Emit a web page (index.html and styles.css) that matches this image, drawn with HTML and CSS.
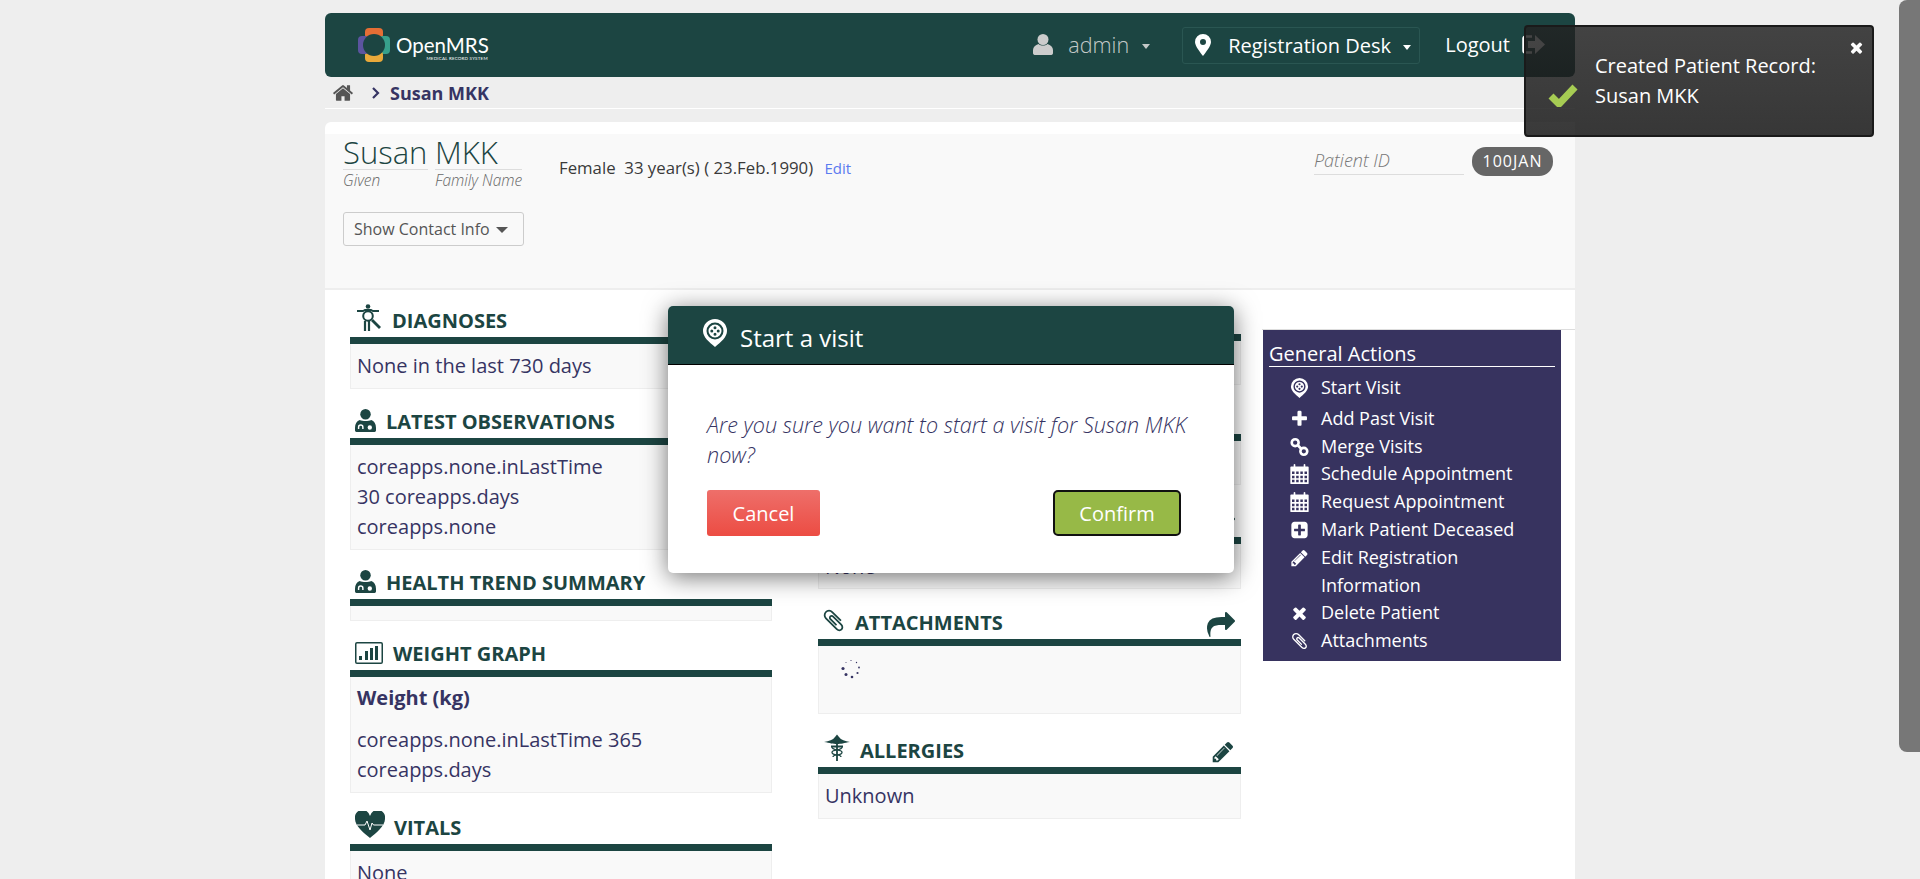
FILE: index.html
```html
<!DOCTYPE html>
<html lang="en">
<head>
    <meta charset="UTF-8">
    <meta name="viewport" content="width=device-width, initial-scale=1.0">
    <title>Susan MKK</title>
    <link rel="stylesheet" href="styles.css">
</head>
<body>

    <svg class="sprite" xmlns="http://www.w3.org/2000/svg">
        <symbol id="i-home" viewBox="0 0 1792 1792"><path d="M1472 992v480q0 26-19 45t-45 19h-384v-384h-256v384h-384q-26 0-45-19t-19-45v-480q0-1 .5-3t.5-3l575-474 575 474q1 2 1 6zm223-69l-62 74q-8 9-21 11h-3q-13 0-21-7l-692-577-692 577q-12 8-24 7-13-2-21-11l-62-74q-8-10-7-23.500t11-21.500l719-599q32-26 76-26t76 26l244 204v-195q0-14 9-23t23-9h192q14 0 23 9t9 23v408l219 182q10 8 11 21.500t-7 23.500z"/></symbol>
        <symbol id="i-pencil" viewBox="0 0 1792 1792"><path d="M491 1536l91-91-235-235-91 91v107h128v128h107zm523-928q0-22-22-22-10 0-17 7l-542 542q-7 7-7 17 0 22 22 22 10 0 17-7l542-542q7-7 7-17zm-54-192l416 416-832 832h-416v-416zm683 96q0 53-37 90l-166 166-416-416 166-165q36-38 90-38 53 0 91 38l235 234q37 39 37 91z"/></symbol>
        <symbol id="i-share" viewBox="0 0 1792 1792"><path d="M1792 640q0 26-19 45l-512 512q-19 19-45 19t-45-19-19-45v-256h-224q-98 0-175.500 6t-154 21.500-133 42.500-105.500 69.500-80 101-48.500 138.500-17.500 181q0 55 5 123 0 6 2.500 23.500t2.500 26.500q0 15-8.500 25t-23.500 10q-16 0-28-17-7-9-13-22t-13.500-30-10.500-24q-127-285-127-451 0-199 53-333 162-403 875-403h224v-256q0-26 19-45t45-19 45 19l512 512q19 19 19 45z"/></symbol>
        <symbol id="i-clip" viewBox="0 0 1792 1792"><path d="M1596 1385q0 117-79 196t-196 79q-135 0-235-100l-777-776q-113-115-113-271 0-159 110-270t269-111q158 0 273 113l605 606q10 10 10 22 0 16-30.500 46.500t-46.500 30.500q-13 0-23-10l-606-607q-79-77-181-77-106 0-179 75t-73 181q0 105 76 181l776 777q63 63 145 63 64 0 106-42t42-106q0-82-63-145l-581-581q-26-24-60-24-29 0-48 19t-19 48q0 32 25 59l410 410q10 10 10 22 0 16-31 47t-47 31q-12 0-22-10l-410-410q-63-61-63-149 0-82 57-139t139-57q88 0 149 63l581 581q100 98 100 235z"/></symbol>
        <symbol id="i-plus" viewBox="0 0 1792 1792"><path d="M1600 736v192q0 40-28 68t-68 28h-416v416q0 40-28 68t-68 28h-192q-40 0-68-28t-28-68v-416h-416q-40 0-68-28t-28-68v-192q0-40 28-68t68-28h416v-416q0-40 28-68t68-28h192q40 0 68 28t28 68v416h416q40 0 68 28t28 68z"/></symbol>
        <symbol id="i-times" viewBox="0 0 1792 1792"><path d="M1490 1322q0 40-28 68l-136 136q-28 28-68 28t-68-28l-294-294-294 294q-28 28-68 28t-68-28l-136-136q-28-28-28-68t28-68l294-294-294-294q-28-28-28-68t28-68l136-136q28-28 68-28t68 28l294 294 294-294q28-28 68-28t68 28l136 136q28 28 28 68t-28 68l-294 294 294 294q28 28 28 68z"/></symbol>
        <symbol id="i-plus-square" viewBox="0 0 1792 1792"><path d="M1408 960v-128q0-26-19-45t-45-19h-320v-320q0-26-19-45t-45-19h-128q-26 0-45 19t-19 45v320h-320q-26 0-45 19t-19 45v128q0 26 19 45t45 19h320v320q0 26 19 45t45 19h128q26 0 45-19t19-45v-320h320q26 0 45-19t19-45zm256-544v960q0 119-84.500 203.500t-203.500 84.500h-960q-119 0-203.500-84.500t-84.500-203.500v-960q0-119 84.500-203.500t203.500-84.500h960q119 0 203.500 84.500t84.500 203.500z"/></symbol>
        <symbol id="i-visit" viewBox="0 0 24 28"><path fill-rule="evenodd" d="M12 0A12 12 0 0 0 0 12c0 6 6 11 12 16 6-5 12-10 12-16A12 12 0 0 0 12 0zm0 3.500a8.500 8.500 0 1 1 0 17 8.500 8.500 0 0 1 0-17z"/><path fill-rule="evenodd" d="M12 5.500a6.500 6.500 0 1 1 0 13 6.500 6.500 0 0 1 0-13zm0 1.800a1.500 1.500 0 1 0 0 3 1.500 1.500 0 0 0 0-3zm0 6.400a1.500 1.500 0 1 0 0 3 1.500 1.500 0 0 0 0-3zM8.800 10.500a1.500 1.500 0 1 0 0 3 1.500 1.500 0 0 0 0-3zm6.400 0a1.500 1.500 0 1 0 0 3 1.500 1.500 0 0 0 0-3z"/></symbol>
        <symbol id="i-calendar" viewBox="0 0 22 24"><path fill-rule="evenodd" d="M1 3h3V1a1 1 0 0 1 2 0v2h10V1a1 1 0 0 1 2 0v2h3a1 1 0 0 1 1 1v19a1 1 0 0 1-1 1H1a1 1 0 0 1-1-1V4a1 1 0 0 1 1-1zm1 6v3h3V9zm5 0v3h3V9zm5 0v3h3V9zm5 0v3h3V9zM2 14v3h3v-3zm5 0v3h3v-3zm5 0v3h3v-3zm5 0v3h3v-3zM2 19v3h3v-3zm5 0v3h3v-3zm5 0v3h3v-3zm5 0v3h3v-3z"/></symbol>
        <symbol id="i-doctor" viewBox="0 0 22 24"><circle cx="11" cy="5.500" r="5.500"/><path fill-rule="evenodd" d="M5 11.500c3 1.500 9 1.500 12 0 3 1 5 4 5 8v3a1.500 1.500 0 0 1-1.500 1.500h-19A1.500 1.500 0 0 1 0 22.500v-3c0-4 2-7 5-8zM6 16a3 3 0 0 0-3 3v2h1.500v-2a1.500 1.500 0 0 1 3 0v2H9v-2a3 3 0 0 0-3-3zm9.500 1a2.300 2.300 0 1 0 0 4.600 2.300 2.300 0 0 0 0-4.600z"/></symbol>
    </svg>

    <div class="container">
        <header class="navbar">
            <a class="logo">
                <svg class="logo-mark" viewBox="0 0 32 34">
                    <rect fill="#e56e35" x="7" y="0" width="18" height="11" rx="4"/>
                    <rect fill="#37a08c" x="21" y="8" width="11" height="18" rx="4"/>
                    <rect fill="#e9a93a" x="7" y="23" width="18" height="11" rx="4"/>
                    <rect fill="#5b549f" x="0" y="8" width="11" height="18" rx="4"/>
                    <circle fill="#1c4542" cx="16" cy="17" r="11"/>
                </svg>
                <span class="logo-text">OpenMRS<small>MEDICAL RECORD SYSTEM</small></span>
            </a>
            <nav class="nav-right">
                <span class="nav-user">
                    <svg class="user-icon" viewBox="0 0 20 21"><circle cx="10" cy="5.500" r="5.500"/><path d="M5.500 10c2.500 2 6.500 2 9 0 3 1 5.500 3 5.500 6v3c0 1.500-1 2-2.500 2h-15C1 21 0 20.500 0 19v-3c0-3 2.500-5 5.500-6z"/></svg>
                    admin <i class="caret"></i>
                </span>
                <span class="nav-location">
                    <svg class="marker-icon" viewBox="0 0 16 22"><path fill-rule="evenodd" d="M8 0a8 8 0 0 0-8 8c0 4 5 10 8 14 3-4 8-10 8-14a8 8 0 0 0-8-8zm0 5a3 3 0 1 1 0 6 3 3 0 0 1 0-6z"/></svg>
                    Registration Desk <i class="caret"></i>
                </span>
                <span class="nav-logout">
                    Logout
                    <svg class="logout-icon" viewBox="0 0 23 19"><path fill="none" stroke="#fff" stroke-width="2.500" d="M10 1.500H3.500a2 2 0 0 0-2 2v12a2 2 0 0 0 2 2H10"/><path fill="#fff" d="M6 6h7V0l10 9.500L13 19v-6H6z"/></svg>
                </span>
            </nav>
        </header>

        <div class="breadcrumb">
            <svg class="home-icon"><use href="#i-home"/></svg>
            <svg class="crumb-arrow" viewBox="0 0 8 12"><path d="M1 1l5 5-5 5" fill="none" stroke="currentColor" stroke-width="2.200"/></svg>
            <strong>Susan MKK</strong>
        </div>

        <main class="card">
            <section class="patient-header">
                <div class="patient-left">
                    <div class="patient-name">
                        <div class="name-part name-given">
                            <span class="name-value">Susan</span>
                            <em>Given</em>
                        </div>
                        <div class="name-part name-family">
                            <span class="name-value">MKK</span>
                            <em>Family Name</em>
                        </div>
                    </div>
                    <button class="contact-btn">Show Contact Info <i class="contact-caret"></i></button>
                </div>
                <div class="patient-demo">
                    Female&nbsp; 33 year(s) ( 23.Feb.1990) <a class="edit-link">Edit</a>
                </div>
                <div class="patient-id">
                    <em class="id-label">Patient ID</em>
                    <span class="id-badge">100JAN</span>
                </div>
            </section>

            <section class="dashboard">
                <div class="col col-left">
                    <div class="widget">
                        <h3 class="widget-head">
                            <svg class="head-icon icon-body" viewBox="0 0 24 27">
                                <g fill="none" stroke="currentColor">
                                    <circle cx="11" cy="2.500" r="2.300" fill="currentColor" stroke="none"/>
                                    <path stroke-width="1.800" d="M0 7h6l2-1h6l2 1h6"/>
                                    <circle cx="11" cy="12" r="4.800" stroke-width="2"/>
                                    <path stroke-width="2.200" d="M8 17v10M12 17v10"/>
                                    <path stroke-width="2.800" d="M15 16l8 8"/>
                                </g>
                            </svg>
                            DIAGNOSES
                        </h3>
                        <div class="widget-body">None in the last 730 days</div>
                    </div>
                    <div class="widget">
                        <h3 class="widget-head">
                            <svg class="head-icon icon-doctor"><use href="#i-doctor"/></svg>
                            LATEST OBSERVATIONS
                        </h3>
                        <div class="widget-body">coreapps.none.inLastTime<br>30 coreapps.days<br>coreapps.none</div>
                    </div>
                    <div class="widget">
                        <h3 class="widget-head">
                            <svg class="head-icon icon-doctor"><use href="#i-doctor"/></svg>
                            HEALTH TREND SUMMARY
                        </h3>
                        <div class="widget-body widget-empty"></div>
                    </div>
                    <div class="widget">
                        <h3 class="widget-head">
                            <svg class="head-icon icon-chart" viewBox="0 0 28 22">
                                <path fill-rule="evenodd" d="M2 0h24a2 2 0 0 1 2 2v18a2 2 0 0 1-2 2H2a2 2 0 0 1-2-2V2a2 2 0 0 1 2-2zm0 1.500a.5.5 0 0 0-.5.500v18a.5.5 0 0 0 .5.500h24a.5.5 0 0 0 .5-.5V2a.5.5 0 0 0-.5-.5z"/>
                                <path d="M4 14h3v4H4zM10 9h3v9h-3zM15 6h3v12h-3zM20 4h3v14h-3z"/>
                            </svg>
                            WEIGHT GRAPH
                        </h3>
                        <div class="widget-body">
                            <p class="graph-title">Weight (kg)</p>
                            coreapps.none.inLastTime 365<br>coreapps.days
                        </div>
                    </div>
                    <div class="widget widget-vitals">
                        <h3 class="widget-head">
                            <svg class="head-icon icon-heart" viewBox="0 0 30 27">
                                <path d="M15 27C9 22 0 15 0 8a7.500 7.500 0 0 1 15-3 7.500 7.500 0 0 1 15 3c0 7-9 14-15 19z"/>
                                <path fill="none" stroke="#fff" stroke-width="1" d="M2 14h8l2-4 3 9 2-7 1.500 2H28"/>
                            </svg>
                            VITALS
                        </h3>
                        <div class="widget-body">None</div>
                    </div>
                </div>

                <div class="col col-mid">
                    <div class="widget">
                        <h3 class="widget-head">
                            <svg class="head-icon icon-peek"><use href="#i-calendar"/></svg>
                        </h3>
                        <div class="widget-body widget-hidden-a"></div>
                    </div>
                    <div class="widget">
                        <h3 class="widget-head"></h3>
                        <div class="widget-body widget-hidden-b"></div>
                    </div>
                    <div class="widget widget-third">
                        <h3 class="widget-head">
                            <svg class="head-action icon-share"><use href="#i-share"/></svg>
                        </h3>
                        <div class="widget-body">None</div>
                    </div>
                    <div class="widget widget-attach">
                        <h3 class="widget-head">
                            <svg class="head-icon icon-clip"><use href="#i-clip"/></svg>
                            ATTACHMENTS
                            <svg class="head-action icon-share"><use href="#i-share"/></svg>
                        </h3>
                        <div class="widget-body widget-loading">
                            <svg class="spinner" viewBox="0 0 20 20">
                                <circle cx="10" cy="1.500" r=".6"/><circle cx="15.500" cy="3.500" r=".7"/><circle cx="18" cy="8.500" r=".9"/>
                                <circle cx="16.500" cy="14" r="1.100"/><circle cx="11" cy="18" r="1.300"/><circle cx="5" cy="15.500" r="1.500"/>
                                <circle cx="2" cy="9.500" r="1.600"/><circle cx="5" cy="3.500" r=".5"/>
                            </svg>
                        </div>
                    </div>
                    <div class="widget widget-allergy">
                        <h3 class="widget-head">
                            <svg class="head-icon icon-caduceus" viewBox="0 0 26 27">
                                <path d="M0 8c5-1 9-2 11-5l2-2.500L15 3c2 3 6 4 11 5-6 1-9 2-13 2S6 9 0 8z"/>
                                <g fill="none" stroke="currentColor">
                                    <path stroke-width="1.800" d="M13 9v18M7 12.500h12"/>
                                    <path stroke-width="1.300" d="M8 13c0 4 10 2 10 5.500S9 20 9 23M18 13c0 4-10 2-10 5.500S17 20 17 23"/>
                                </g>
                            </svg>
                            ALLERGIES
                            <svg class="head-action icon-edit"><use href="#i-pencil"/></svg>
                        </h3>
                        <div class="widget-body">Unknown</div>
                    </div>
                </div>

                <aside class="actions">
                    <h4>General Actions</h4>
                    <ul>
                        <li class="action-first"><svg><use href="#i-visit"/></svg>Start Visit</li>
                        <li><svg><use href="#i-plus"/></svg>Add Past Visit</li>
                        <li>
                            <svg viewBox="0 0 22 22"><g fill="none" stroke="currentColor" stroke-width="3"><circle cx="6" cy="6" r="4"/><circle cx="16" cy="16" r="4"/><path d="M9 9l4 4"/></g></svg>
                            Merge Visits
                        </li>
                        <li><svg><use href="#i-calendar"/></svg>Schedule Appointment</li>
                        <li><svg><use href="#i-calendar"/></svg>Request Appointment</li>
                        <li><svg><use href="#i-plus-square"/></svg>Mark Patient Deceased</li>
                        <li><svg><use href="#i-pencil"/></svg>Edit Registration Information</li>
                        <li><svg><use href="#i-times"/></svg>Delete Patient</li>
                        <li><svg><use href="#i-clip"/></svg>Attachments</li>
                    </ul>
                </aside>
            </section>
        </main>
    </div>

    <!-- Start visit dialog -->
    <div class="dialog">
        <div class="dialog-head">
            <svg class="dialog-icon"><use href="#i-visit"/></svg>
            <h2>Start a visit</h2>
        </div>
        <div class="dialog-body">
            <p>Are you sure you want to start a visit for Susan MKK now?</p>
            <div class="dialog-buttons">
                <button class="btn-cancel">Cancel</button>
                <button class="btn-confirm">Confirm</button>
            </div>
        </div>
    </div>

    <!-- Toast message -->
    <div class="toast">
        <svg class="toast-close"><use href="#i-times"/></svg>
        <svg class="toast-check" viewBox="0 0 30 23"><path d="M3 12l8 8L27 3" fill="none" stroke="#a6cc53" stroke-width="7" stroke-linejoin="round"/></svg>
        <p>Created Patient Record:<br>Susan MKK</p>
    </div>

    <div class="scroll-thumb"></div>
</body>
</html>
```

FILE: styles.css
```css
* {
    box-sizing: border-box;
}

html, body {
    height: 879px;
    margin: 0;
    overflow: hidden;
}

body {
    position: relative;
    background-color: #eee;
    color: #363463;
    font-family: "Open Sans", sans-serif;
    font-size: 20px;
}

.sprite {
    display: none;
}

.container {
    width: 1250px;
    margin-left: 325px;
    padding-top: 13px;
}

/* Top bar */
.navbar {
    display: flex;
    justify-content: space-between;
    align-items: center;
    height: 64px;
    background-color: #1c4542;
    border-radius: 6px;
    color: #fff;
}

.logo {
    display: flex;
    align-items: center;
    margin-left: 33px;
}

.logo-mark {
    width: 32px;
    height: 34px;
}

.logo-text {
    position: relative;
    margin-left: 6px;
    font-family: Lato, sans-serif;
    font-size: 20.500px;
    font-weight: 400;
    line-height: 30px;
}

.logo-text small {
    position: absolute;
    right: 1px;
    top: 26px;
    font-size: 4.500px;
    line-height: 6px;
    letter-spacing: .2px;
    white-space: nowrap;
}

.nav-right {
    display: flex;
    align-items: center;
    font-size: 20px;
    margin-right: 30px;
}

.nav-user {
    display: flex;
    align-items: center;
    padding-bottom: 2px;
    color: #c4c9c8;
    font-size: 21.600px;
    font-weight: 300;
    margin-right: 32px;
}

.user-icon {
    width: 20px;
    height: 21px;
    margin-right: 15px;
    fill: #ccc;
}

.caret {
    display: inline-block;
    width: 0;
    height: 0;
    margin-left: 13px;
    margin-top: 4px;
    border-top: 5px solid currentColor;
    border-left: 4px solid transparent;
    border-right: 4px solid transparent;
}

.nav-location {
    display: flex;
    align-items: center;
    width: 238px;
    height: 37px;
    padding-left: 12px;
    margin-right: 25px;
    border: 1px solid #2a5652;
    border-radius: 3px;
}

.nav-location .caret {
    margin-left: 12px;
}

.marker-icon {
    width: 16px;
    height: 22px;
    margin-right: 17px;
    fill: #fff;
}

.nav-logout {
    display: flex;
    align-items: center;
    padding-bottom: 1px;
}

.logout-icon {
    width: 23px;
    height: 19px;
    margin-left: 12px;
}

/* Breadcrumb */
.breadcrumb {
    display: flex;
    align-items: center;
    height: 32px;
    padding-left: 7px;
    border-bottom: 1px solid #fff;
    font-size: 18px;
}

.breadcrumb strong {
    font-weight: 700;
    margin-left: 10px;
    padding-top: 1px;
}

.home-icon {
    width: 22px;
    height: 22px;
    fill: #555;
}

.crumb-arrow {
    width: 8px;
    height: 12px;
    margin-left: 18px;
}

/* Main card */
.card {
    margin-top: 13px;
    padding-top: 12px;
    background-color: #fff;
    border-radius: 6px 0 0 0;
    height: 800px;
}

.patient-header {
    display: flex;
    align-items: flex-start;
    height: 156px;
    padding-left: 18px;
    background-color: #f9f9f9;
    border-bottom: 2px solid #eee;
}

.patient-left {
    width: 181px;
}

.patient-name {
    display: flex;
    color: #1c4542;
}

.name-part {
    display: flex;
    flex-direction: column;
}

.name-given {
    width: 85px;
    margin-right: 7px;
}

.name-family {
    width: 87px;
}

.name-value {
    display: block;
    height: 36px;
    font-size: 31px;
    font-weight: 300;
    line-height: 36px;
    border-bottom: 1px solid #ddd;
}

.name-part em {
    font-size: 15.500px;
    font-weight: 300;
    line-height: 21px;
    color: #666;
    white-space: nowrap;
}

.contact-btn {
    display: block;
    width: 181px;
    height: 34px;
    margin-top: 21px;
    padding: 0 0 0 10px;
    background-color: #fff0;
    border: 1px solid #ccc;
    border-radius: 3px;
    color: #555;
    font-family: "Open Sans", sans-serif;
    font-size: 16px;
    text-align: left;
}

.contact-caret {
    display: inline-block;
    margin: 0 0 2px 2px;
    border-top: 6px solid #555;
    border-left: 6px solid transparent;
    border-right: 6px solid transparent;
}

.patient-demo {
    margin: 22px 0 0 35px;
    font-size: 16.800px;
    color: #3a3a3a;
    line-height: 24px;
    white-space: nowrap;
}

.edit-link {
    margin-left: 7px;
    font-size: 15px;
    color: #5b7bf0;
}

.patient-id {
    display: flex;
    align-items: flex-start;
    margin: 13px 0 0 auto;
    padding-right: 22px;
}

.id-label {
    display: block;
    width: 150px;
    height: 28px;
    font-size: 18px;
    font-weight: 300;
    line-height: 27px;
    color: #777;
    border-bottom: 1px solid #ddd;
}

.id-badge {
    width: 81px;
    height: 29px;
    margin-left: 8px;
    background-color: #666;
    border-radius: 14px;
    color: #fff;
    font-size: 16px;
    line-height: 29px;
    letter-spacing: 1px;
    text-align: center;
}

/* Dashboard columns */
.dashboard {
    display: flex;
    align-items: flex-start;
    padding-left: 25px;
}

.col {
    flex: none;
}

.col-left {
    width: 422px;
    margin-top: 14px;
}

.col-mid {
    width: 423px;
    margin-top: 11px;
    margin-left: 46px;
}

.widget {
    margin-bottom: 16px;
}

.widget-vitals {
    margin-top: 18px;
}

.widget-third {
    margin-top: 19px;
}

.widget-third .widget-body {
    padding-top: 8px;
    padding-bottom: 6px;
}

.widget-attach {
    margin-top: 17px;
}

.widget-allergy {
    margin-top: 20px;
}

.widget-head {
    display: flex;
    align-items: flex-end;
    height: 40px;
    margin: 0;
    padding-bottom: 3px;
    border-bottom: 7px solid #1c4542;
    color: #1c4542;
    font-size: 20px;
    font-weight: 700;
    line-height: 27px;
}

.widget-body {
    padding: 7px 6px;
    background-color: #f9f9f9;
    border: 1px solid #eee;
    border-top: none;
    line-height: 30px;
}

.widget-empty {
    height: 15px;
    padding: 0;
}

.widget-hidden-a {
    height: 44px;
}

.widget-hidden-b {
    height: 44px;
}

.widget-loading {
    height: 68px;
    padding: 13px 0 0 22px;
}

.graph-title {
    margin: -1px 0 12px;
    font-weight: 700;
}

.head-icon {
    flex: none;
    fill: currentColor;
}

.head-action {
    margin-left: auto;
    margin-right: 6px;
    fill: currentColor;
}

.icon-body {
    width: 24px;
    height: 27px;
    margin: 0 11px 3px 7px;
}

.icon-doctor {
    width: 21px;
    height: 23px;
    margin: 0 10px 3px 5px;
}

.icon-chart {
    width: 28px;
    height: 22px;
    margin: 0 10px 3px 5px;
}

.icon-heart {
    width: 30px;
    height: 27px;
    margin: 0 9px 3px 5px;
}

.icon-clip {
    width: 25px;
    height: 25px;
    margin: 0 9px 3px 3px;
}

.icon-caduceus {
    width: 26px;
    height: 27px;
    margin: 0 10px 3px 6px;
}

.icon-peek {
    width: 18px;
    height: 24px;
    margin: 0 0 3px 9px;
}

.icon-share {
    width: 28px;
    height: 28px;
    margin-bottom: -3px;
}

.icon-edit {
    width: 24px;
    height: 24px;
}

.spinner {
    display: block;
    width: 20px;
    height: 20px;
    fill: #363463;
}

/* General actions */
.actions {
    position: relative;
    width: 298px;
    height: 331px;
    margin: 40px 0 0 22px;
    padding: 10px 6px 0;
    background-color: #37335f;
    color: #fff;
}

.actions::before {
    content: "";
    position: absolute;
    left: -1px;
    right: -14px;
    top: -1px;
    height: 1px;
    background-color: #ddd;
}

.actions h4 {
    margin: 0;
    height: 27px;
    font-size: 20px;
    font-weight: 400;
    line-height: 28px;
    border-bottom: 1px solid #fff;
}

.actions ul {
    list-style: none;
    margin: 0;
    padding: 7px 0 0 52px;
}

.actions li {
    position: relative;
    font-size: 18px;
    line-height: 27.800px;
    padding-right: 30px;
}

.action-first {
    margin-bottom: 3px;
}

.actions li svg {
    position: absolute;
    left: -31px;
    top: 4px;
    width: 19px;
    height: 20px;
    fill: currentColor;
}

/* Dialog */
.dialog {
    position: absolute;
    left: 668px;
    top: 306px;
    width: 566px;
    height: 267px;
    background-color: #fff;
    border-radius: 5px;
    box-shadow: 0 4px 24px rgba(0, 0, 0, .55);
}

.dialog-head {
    display: flex;
    align-items: center;
    height: 59px;
    padding-left: 35px;
    background-color: #1c4542;
    border-bottom: 1px solid #000;
    border-radius: 5px 5px 0 0;
    color: #fff;
}

.dialog-icon {
    width: 24px;
    height: 28px;
    margin: -5px 13px 0 0;
    fill: #fff;
}

.dialog-head h2 {
    margin: 5px 0 0;
    font-size: 24px;
    font-weight: 400;
}

.dialog-body {
    padding: 45px 38px 0 39px;
}

.dialog-body p {
    margin: 0;
    font-size: 21.600px;
    font-style: italic;
    font-weight: 300;
    line-height: 30px;
    color: #363463;
}

.dialog-buttons {
    display: flex;
    justify-content: space-between;
    margin-top: 20px;
    padding-right: 15px;
}

.dialog-buttons button {
    height: 46px;
    color: #fff;
    font-family: "Open Sans", sans-serif;
    font-size: 20px;
}

.btn-cancel {
    width: 113px;
    border: none;
    border-radius: 3px;
    background: linear-gradient(#ee6f6a, #ec4c43);
}

.btn-confirm {
    width: 128px;
    border: 2px solid #111;
    border-radius: 5px;
    background-color: #97b947;
}

/* Toast */
.toast {
    position: absolute;
    left: 1524px;
    top: 25px;
    width: 350px;
    height: 112px;
    padding: 24px 0 0 69px;
    background: linear-gradient(rgba(34, 34, 34, .84), rgba(20, 20, 20, .84));
    border: 2px solid #1a1a1a;
    border-radius: 4px;
    color: #fff;
}

.toast p {
    margin: 0;
    font-size: 20px;
    font-weight: 400;
    line-height: 30px;
}

.toast-close {
    position: absolute;
    right: 7px;
    top: 12px;
    width: 17px;
    height: 17px;
    fill: #fff;
}

.toast-check {
    position: absolute;
    left: 22px;
    top: 57px;
    width: 30px;
    height: 23px;
}

.scroll-thumb {
    position: absolute;
    right: 0;
    top: 0;
    width: 21px;
    height: 752px;
    background-color: #777;
    border-radius: 8px 0 0 8px;
}
```
